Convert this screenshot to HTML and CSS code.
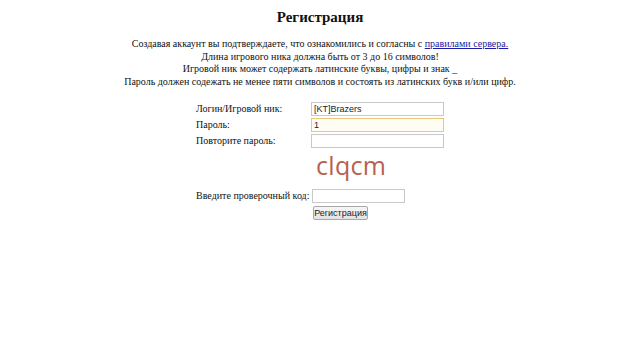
FILE: index.html
```html
<!DOCTYPE html>
<html>
<head>
<meta charset="utf-8">
<link rel="stylesheet" href="styles.css">
</head>
<body>
<h1 class="title">Регистрация</h1>
<div class="intro">
  <div>Создавая аккаунт вы подтверждаете, что ознакомились и согласны с <a href="#" class="link">правилами сервера.</a></div>
  <div>Длина игрового ника должна быть от 3 до 16 символов!</div>
  <div>Игровой ник может содержать латинские буквы, цифры и знак _</div>
  <div>Пароль должен содежать не менее пяти символов и состоять из латинских букв и/или цифр.</div>
</div>
<div class="form">
  <div class="row"><span class="label">Логин/Игровой ник:</span><input class="field" type="text" value="[KT]Brazers"></div>
  <div class="row"><span class="label">Пароль:</span><input class="field focus" type="text" value="1"></div>
  <div class="row"><span class="label">Повторите пароль:</span><input class="field" type="text" value=""></div>
  <div class="captcha">clqcm</div>
  <div class="code-row"><span class="code-label">Введите проверочный код:</span><input class="code" type="text" value=""></div>
  <div class="btn-row"><button class="btn">Регистрация</button></div>
</div>
</body>
</html>
```
FILE: styles.css
```css
html, body {
  margin: 0;
  padding: 0;
  background: #fff;
}
body {
  font-family: "Liberation Serif", "Times New Roman", serif;
  font-size: 10px;
  color: #111;
}
.title {
  margin: 8px 0 0 0;
  font-size: 15px;
  line-height: 18px;
  text-align: center;
  font-weight: bold;
}
.intro {
  margin-top: 12px;
  text-align: center;
  line-height: 12.7px;
}
.link {
  color: #1a1aa6;
  text-decoration: underline;
}
.form {
  width: 248px;
  margin: 13px auto 0;
}
.row {
  display: flex;
  align-items: center;
  height: 14px;
  margin-bottom: 2px;
}
.label {
  width: 115px;
  flex: none;
}
.field {
  box-sizing: border-box;
  width: 133px;
  height: 14px;
  margin: 0;
  padding: 0 2px;
  border: 1px solid #c9c9c9;
  font-family: Arial, "Liberation Sans", sans-serif;
  font-size: 9px;
  color: #222;
  background: #fff;
  outline: none;
}
.field.focus {
  border-color: #e8c87a;
  background: #fffdf3;
}
.captcha {
  margin: 2px 0 0 120px;
  font-family: "Open Sans", "DejaVu Sans", sans-serif;
  font-size: 25px;
  line-height: 30px;
  color: #b8614e;
  letter-spacing: 0.3px;
}
.code-row {
  display: flex;
  align-items: center;
  height: 14px;
  margin-top: 9px;
}
.code-label {
  width: 116px;
  flex: none;
  white-space: nowrap;
}
.code {
  box-sizing: border-box;
  width: 93px;
  height: 14px;
  margin: 0;
  padding: 0 2px;
  border: 1px solid #c9c9c9;
  background: #fff;
  outline: none;
}
.btn-row {
  margin-top: 3px;
  padding-left: 117px;
}
.btn {
  box-sizing: border-box;
  height: 14px;
  width: 55px;
  padding: 0;
  margin: 0;
  font-family: Arial, "Liberation Sans", sans-serif;
  font-size: 9px;
  line-height: 12px;
  color: #222;
  border: 1px solid #a8a8a8;
  border-radius: 2px;
  background: linear-gradient(#f6f6f6, #e2e2e2);
}
```
